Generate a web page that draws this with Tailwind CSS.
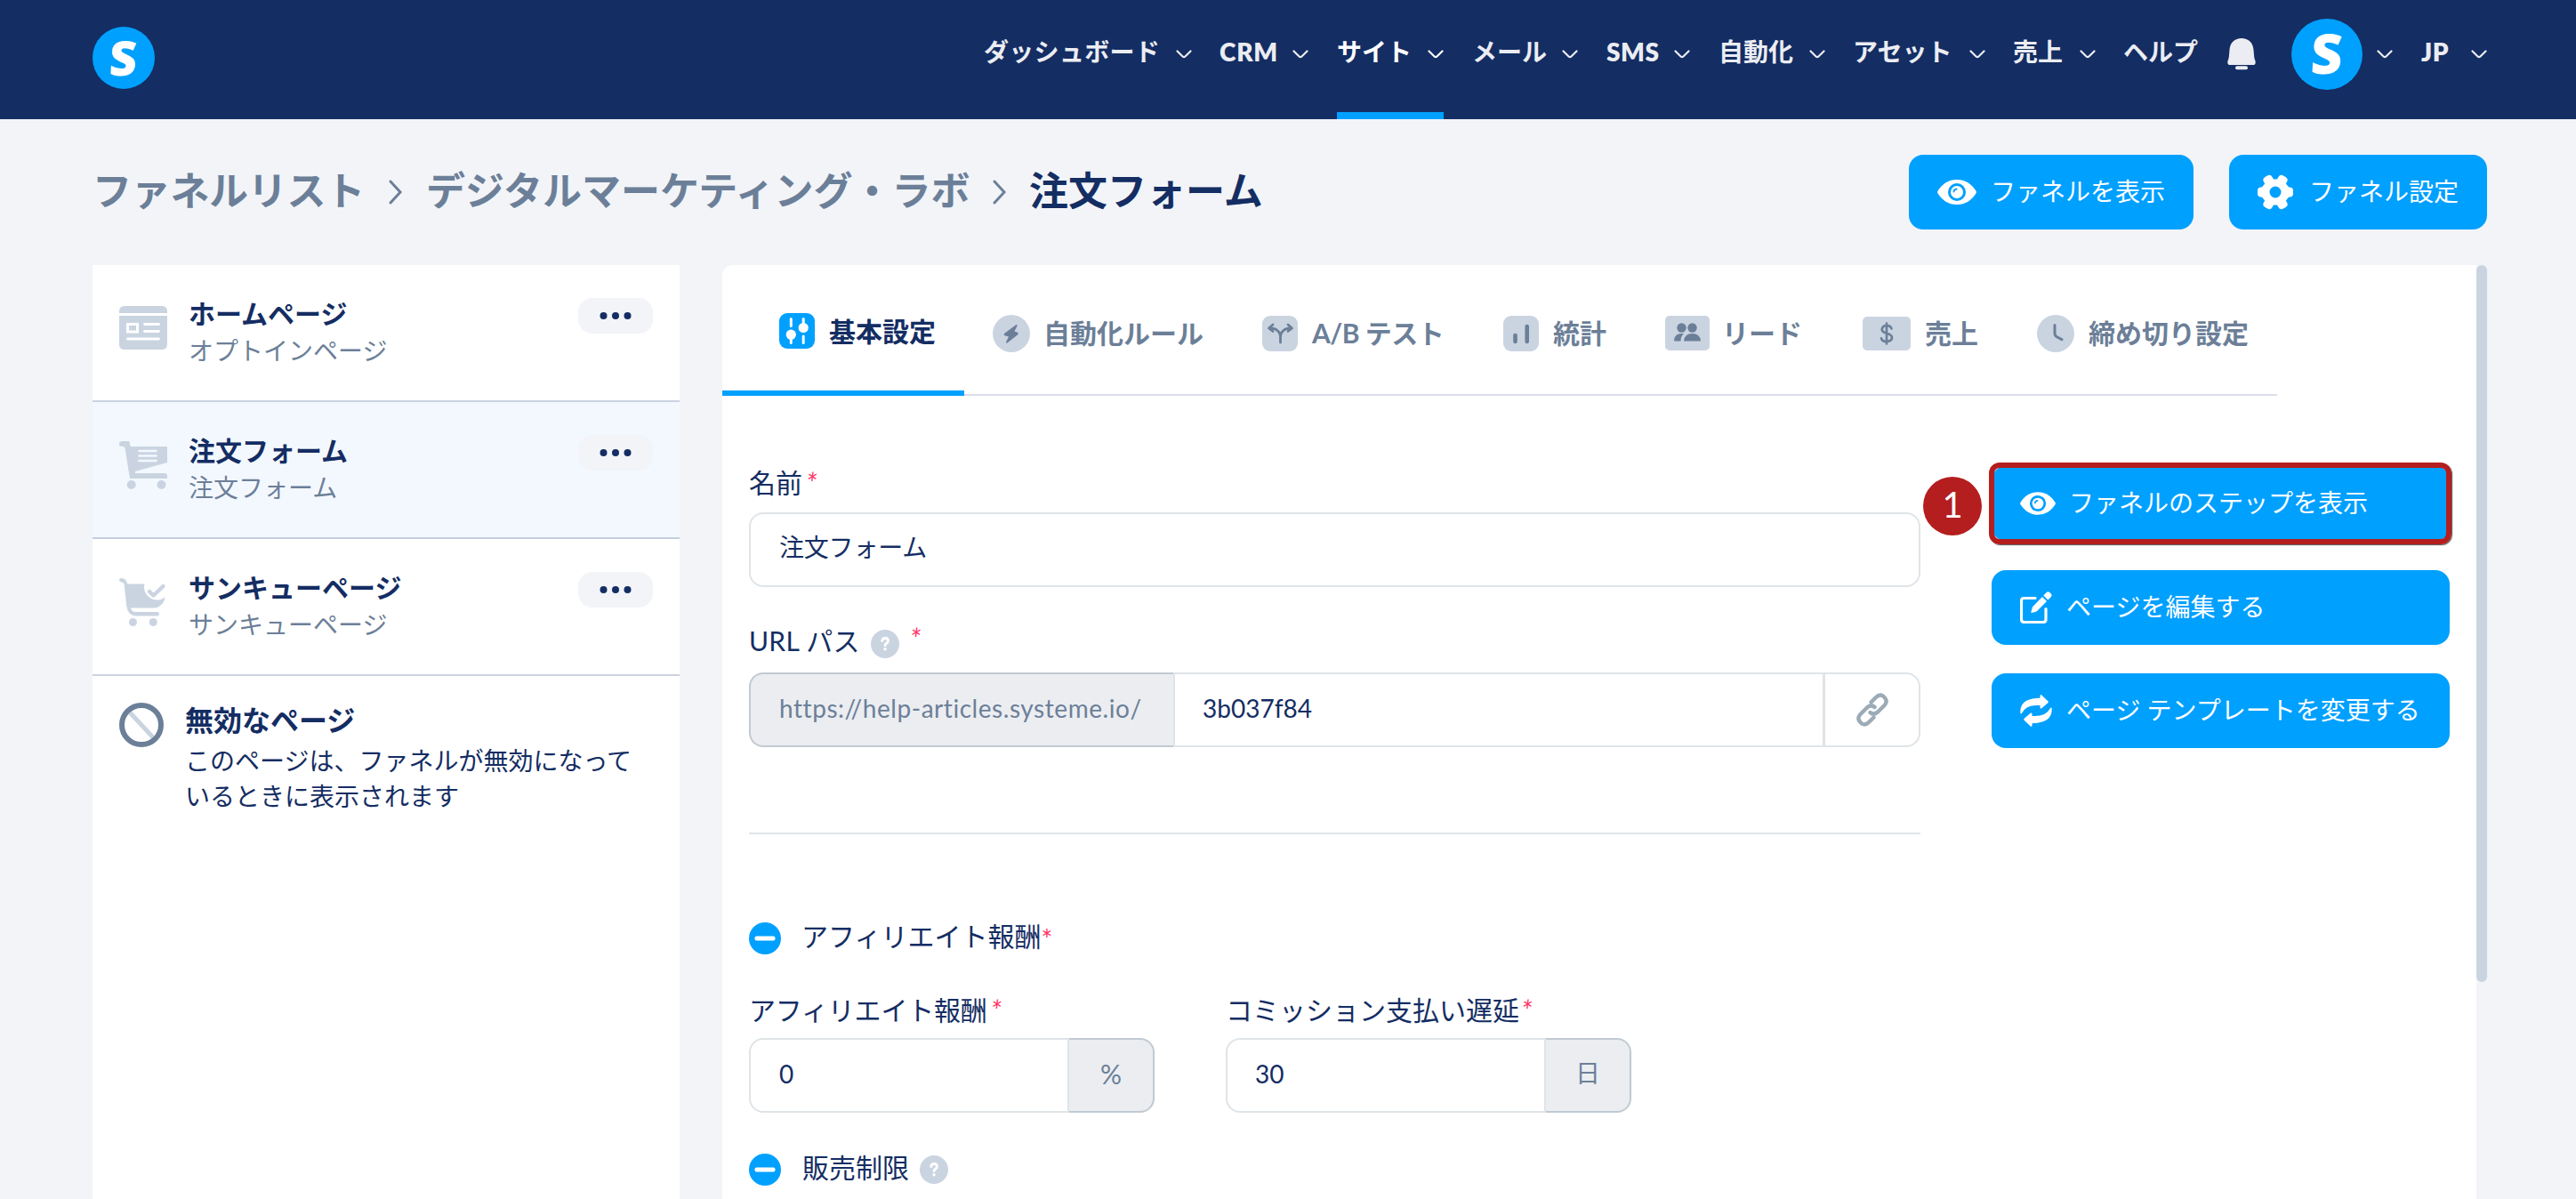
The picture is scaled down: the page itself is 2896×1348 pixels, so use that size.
<!DOCTYPE html>
<html lang="ja">
<head>
  <meta charset="UTF-8" />
  <meta name="viewport" content="width=device-width, initial-scale=1.0" />
  <title>注文フォーム - systeme.io</title>
  <script src="https://cdn.jsdelivr.net/npm/@tailwindcss/browser@4"></script>
</head>
<body class="h-[1348px] overflow-hidden bg-[#f2f4f8] font-['Lato','Noto_Sans_CJK_JP',sans-serif] text-[28px] text-[#142d63]">

  <!-- Shared icons -->
  <svg class="hidden">
    <symbol id="chevron" viewBox="0 0 18 10"><path d="M1.5 1.5l6.3 6.2q1.2 1 2.4 0l6.3-6.2" fill="none" stroke="currentColor" stroke-width="2.2" stroke-linecap="round" /></symbol>
    <symbol id="eye" viewBox="0 0 44 28">
      <path fill="currentColor" fill-rule="evenodd" d="M22 0C33 0 39 6 43.400 12.500Q44.300 14 43.400 15.500C39 22 33 28 22 28S5 22 .6 15.500Q-.3 14 .6 12.500C5 6 11 0 22 0zM22 4a10 10 0 1 0 0 20a10 10 0 1 0 0-20z" />
      <circle cx="22" cy="14" r="7" fill="currentColor" />
      <path d="M18.500 13.500q.3-2.700 3-3" fill="none" stroke="#00a0ff" stroke-width="1.800" stroke-linecap="round" />
    </symbol>
    <symbol id="help" viewBox="0 0 32 32">
      <circle cx="16" cy="16" r="16" fill="#cad4e1" />
      <path d="M12.800 12.500q.2-3 3.400-3t3.200 2.900q0 1.700-1.800 2.800-1.500.9-1.500 2.500" fill="none" stroke="#fff" stroke-width="2.900" stroke-linecap="round" />
      <circle cx="16" cy="21.800" r="1.700" fill="#fff" />
    </symbol>
    <symbol id="minus" viewBox="0 0 36 36"><circle cx="18" cy="18" r="18" fill="#00a0ff" /><rect x="6.500" y="15.500" width="23" height="5" rx="2" fill="#fff" /></symbol>
    <symbol id="dots" viewBox="0 0 36 8"><circle cx="4.500" cy="4" r="4" fill="#142d63" /><circle cx="18" cy="4" r="4" fill="#142d63" /><circle cx="31.500" cy="4" r="4" fill="#142d63" /></symbol>
  </svg>

  <!-- Header -->
  <header class="flex h-[134px] items-start justify-between bg-[#142d63] pr-[100px] pl-[104px] text-[#ebedf2]">
    <a class="mt-[30px] flex size-[70px] items-center justify-center rounded-full bg-[#00a0ff]">
      <span class="-skew-x-3 pb-0.5 font-['Open_Sans'] text-[54px] leading-none font-extrabold text-white">S</span>
    </a>
    <nav class="flex h-[134px] items-start leading-[116px] font-bold whitespace-nowrap">
      <a class="mr-[31px] flex w-[234px] items-center justify-between"><span class="tracking-[0.3px]">ダッシュボード</span><svg class="mt-1.5 h-2.5 w-[18px]"><use href="#chevron" /></svg></a>
      <a class="mr-8 flex w-[100px] items-center justify-between"><span class="font-extrabold tracking-[0.8px]">CRM</span><svg class="mt-1.5 h-2.5 w-[18px]"><use href="#chevron" /></svg></a>
      <a class="mr-8 flex h-[134px] w-[120px] items-start justify-between border-b-8 border-[#00a0ff] text-white">サイト<svg class="mt-14 h-2.5 w-[18px]"><use href="#chevron" /></svg></a>
      <a class="mr-8 flex w-[119px] items-center justify-between">メール<svg class="mt-1.5 h-2.5 w-[18px]"><use href="#chevron" /></svg></a>
      <a class="mr-8 flex w-[94px] items-center justify-between"><span class="font-extrabold tracking-[0.6px]">SMS</span><svg class="mt-1.5 h-2.5 w-[18px]"><use href="#chevron" /></svg></a>
      <a class="mr-[31px] flex w-[120px] items-center justify-between">自動化<svg class="mt-1.5 h-2.5 w-[18px]"><use href="#chevron" /></svg></a>
      <a class="mr-[31px] flex w-[149px] items-center justify-between">アセット<svg class="mt-1.5 h-2.5 w-[18px]"><use href="#chevron" /></svg></a>
      <a class="mr-[31px] flex w-[93px] items-center justify-between">売上<svg class="mt-1.5 h-2.5 w-[18px]"><use href="#chevron" /></svg></a>
      <a class="mr-[33px] w-[84px]">ヘルプ</a>
      <svg class="mt-[43px] h-9 w-8" viewBox="0 0 32 36" fill="currentColor">
        <path d="M16 0c7.500 0 13 5 13.500 13l.7 8q.2 2 1.300 4.500.9 4.500-2.500 4.500H3Q-.4 30 .5 25.500 1.600 23 1.800 21l.7-8C3 5 8.500 0 16 0z" /><rect x="9" y="31.300" width="14" height="4" rx="2" />
      </svg>
      <a class="mt-[21px] ml-10 flex size-20 items-center justify-center rounded-full bg-[#00a0ff]"><span class="-skew-x-3 pb-1 font-['Open_Sans'] text-[62px] leading-none font-extrabold text-white">S</span></a>
      <svg class="mt-14 ml-4 h-2.5 w-[18px]"><use href="#chevron" /></svg>
      <a class="ml-8 flex w-[74px] items-center justify-between"><span class="font-extrabold tracking-[0.5px]">JP</span><svg class="mt-1.5 h-2.5 w-[18px]"><use href="#chevron" /></svg></a>
    </nav>
  </header>

  <!-- Breadcrumb and funnel actions -->
  <section class="flex h-[164px] items-start justify-between pt-10 pr-[100px] pl-[104px]">
    <div class="flex h-[84px] items-center text-[44px] font-bold whitespace-nowrap text-[#6c7f98]">
      <a class="w-[333px] pb-1 tracking-[-0.3px]">ファネルリスト</a>
      <svg class="h-7 w-4" viewBox="0 0 16 28" fill="none" stroke="currentColor" stroke-width="3" stroke-linecap="round"><path d="M2 2l11 12L2 26" /></svg>
      <a class="ml-[26px] w-[637px] pb-1">デジタルマーケティング・ラボ</a>
      <svg class="h-7 w-4" viewBox="0 0 16 28" fill="none" stroke="currentColor" stroke-width="3" stroke-linecap="round"><path d="M2 2l11 12L2 26" /></svg>
      <span class="ml-[25px] pb-1 text-[#142d63]">注文フォーム</span>
    </div>
    <div class="flex gap-10 whitespace-nowrap text-white">
      <button class="flex h-[84px] w-80 items-center rounded-2xl bg-[#00a0ff] pl-8">
        <svg class="mr-4 h-7 w-11"><use href="#eye" /></svg><span class="pb-0.5">ファネルを表示</span>
      </button>
      <button class="flex h-[84px] w-[290px] items-center rounded-2xl bg-[#00a0ff] pl-8">
        <svg class="mr-[18px] h-10 w-10" viewBox="-20 -20 40 40" fill="currentColor">
          <path fill-rule="evenodd" d="M-16-4.500L-11-10.500-4-14.500H4L11-10.500 16-4.500V4.500L11 10.500 4 14.500H-4L-11 10.500-16 4.500zM0-6.500a6.500 6.500 0 1 0 0 13a6.500 6.500 0 1 0 0-13z" />
          <g><rect x="-20" y="-5.500" width="10" height="11" rx="4" /><rect x="10" y="-5.500" width="10" height="11" rx="4" /></g>
          <g transform="rotate(60)"><rect x="-20.500" y="-5.500" width="10" height="11" rx="4" /><rect x="10.500" y="-5.500" width="10" height="11" rx="4" /></g>
          <g transform="rotate(120)"><rect x="-20.500" y="-5.500" width="10" height="11" rx="4" /><rect x="10.500" y="-5.500" width="10" height="11" rx="4" /></g>
        </svg><span class="pb-0.5">ファネル設定</span>
      </button>
    </div>
  </section>

  <main class="flex items-start pl-[104px]">

    <!-- Funnel steps -->
    <aside class="h-[1050px] w-[660px] bg-white">
      <div class="flex h-[154px] items-start border-b-2 border-[#cbd3e1] pr-[30px] pl-[30px]">
        <svg class="mt-[46px] h-[49px] w-[54px]" viewBox="0 0 54 49">
          <path fill="#cad4e1" d="M0 8V6Q0 0 6 0h42q6 0 6 6v2zM0 11h54v32q0 6-6 6H6q-6 0-6-6z" />
          <rect x="9.500" y="20.500" width="11" height="8.500" fill="none" stroke="#fff" stroke-width="3" />
          <path d="M28.500 20.500h16M28.500 28.500h16M9.500 37h35" stroke="#fff" stroke-width="2.800" stroke-linecap="round" />
        </svg>
        <div class="ml-6 flex-1 pt-[34px]">
          <p class="text-[30px] leading-10 font-bold">ホームページ</p>
          <p class="mt-1 leading-9 text-[#6c7f98]">オプトインページ</p>
        </div>
        <button class="mt-[37px] flex h-10 w-[84px] items-center justify-center rounded-2xl bg-[#f2f4f8]"><svg class="h-2 w-9"><use href="#dots" /></svg></button>
      </div>
      <div class="flex h-[154px] items-start border-b-2 border-[#c5cfe1] bg-[#f3f8ff] pr-[30px] pl-[30px]">
        <svg class="mt-[44px] h-[54px] w-[54px]" viewBox="0 0 54 54">
          <path fill="#cad4e1" d="M3 0h7q2 0 2 2v2q0 2 2 2h40v18L18 34v2h33q3 0 3 3v3H12L6.500 8Q6 6 4 6H3Q0 6 0 3T3 0z" />
          <path d="M22.500 11h19M22.500 16.500h19M22.500 22h19" stroke="#f3f8ff" stroke-width="2.600" stroke-linecap="round" />
          <circle cx="13.700" cy="49" r="5" fill="#cad4e1" /><circle cx="47.500" cy="49" r="5" fill="#cad4e1" />
        </svg>
        <div class="ml-6 flex-1 pt-[34px]">
          <p class="text-[30px] leading-10 font-bold">注文フォーム</p>
          <p class="mt-1 leading-9 text-[#6c7f98]">注文フォーム</p>
        </div>
        <button class="mt-[37px] flex h-10 w-[84px] items-center justify-center rounded-2xl bg-[#f2f4f8]"><svg class="h-2 w-9"><use href="#dots" /></svg></button>
      </div>
      <div class="flex h-[154px] items-start border-b-2 border-[#cbd3e1] pr-[30px] pl-[30px]">
        <svg class="mt-[44px] h-[54px] w-[54px]" viewBox="0 0 54 54">
          <path fill="#cad4e1" d="M2 0Q7.500-.3 9.200 6.500H28.500A14.500 14.500 0 0 0 51.500 21.500Q51 27 46.500 30.500 43.500 33.500 39 33.500H13Q14 38 19 38H43q2 0 2 2.200T43 42.500H20Q9.500 42.500 8.300 31.500L5.500 6.500Q5.200 4.500 2 4.200 0 4 0 2T2 0z" />
          <path d="M34 15l4.500 4.500L49.500 9" fill="none" stroke="#cad4e1" stroke-width="4.400" stroke-linecap="round" stroke-linejoin="round" />
          <circle cx="15.500" cy="49.500" r="4.500" fill="#cad4e1" /><circle cx="38.300" cy="49.500" r="4.500" fill="#cad4e1" />
        </svg>
        <div class="ml-6 flex-1 pt-[34px]">
          <p class="text-[30px] leading-10 font-bold">サンキューページ</p>
          <p class="mt-1 leading-9 text-[#6c7f98]">サンキューページ</p>
        </div>
        <button class="mt-[37px] flex h-10 w-[84px] items-center justify-center rounded-2xl bg-[#f2f4f8]"><svg class="h-2 w-9"><use href="#dots" /></svg></button>
      </div>
      <div class="flex items-start pl-[30px]">
        <svg class="mt-[30px] size-[50px]" viewBox="0 0 50 50" fill="none" stroke-width="6">
          <path d="M12 11l26 28" stroke="#cad4e1" stroke-width="5" /><circle cx="25" cy="25" r="22" stroke="#6c7f98" />
        </svg>
        <div class="ml-6 pt-[30px]">
          <p class="text-[32px] leading-10 font-bold">無効なページ</p>
          <p class="mt-[5px] leading-10">このページは、ファネルが無効になって<br />いるときに表示されます</p>
        </div>
      </div>
    </aside>

    <!-- Step settings -->
    <section class="ml-12 h-[1050px] w-[1972px] rounded-tl-xl bg-white">

      <!-- Tabs -->
      <div class="flex h-[147px] w-[1748px] border-b-2 border-[#dadde8] text-[30px] font-bold whitespace-nowrap text-[#6c7f98]">
        <a class="flex h-[147px] w-[272px] items-center border-b-6 border-[#00a0ff] pt-[7px] pl-16 text-[#142d63]">
          <svg class="mr-4 size-10" viewBox="0 0 40 40">
            <rect width="40" height="40" rx="9" fill="#00a0ff" />
            <g stroke="#fff" stroke-width="3" stroke-linecap="round"><path d="M13.300 6.500v8M13.300 24v9.500M27.200 6.500v8M27.200 26v7.500" /></g>
            <circle cx="13.300" cy="24.200" r="5.600" fill="#fff" /><circle cx="27.200" cy="16.500" r="5.600" fill="#fff" />
          </svg>基本設定
        </a>
        <a class="flex w-[303px] items-center pt-2 pl-8">
          <svg class="mr-[15px] size-[42px]" viewBox="0 0 42 42"><circle cx="21" cy="21" r="21" fill="#cad4e1" /><path fill="#6c7f98" d="M26.500 11L13 21q-1 1.500 .5 2.200l4.500 1.200-3 6q0 1.600 1.500 1.200L28.500 22q1-1.500-.5-2.200l-3.500-1.300 3-6Q27.700 10.500 26.500 11z" /></svg>自動化ルール
        </a>
        <a class="flex w-[271px] items-center pt-2 pl-8">
          <svg class="mr-4 size-10" viewBox="0 0 40 40"><rect width="40" height="40" rx="9" fill="#cad4e1" /><path d="M20.500 30V23Q20.500 19.500 17 16.500 14.500 14 9 14M20.500 23Q20.500 19.500 24 16.500 26.500 14 32 14M12 10l-4.500 4 4.500 3.500M29 10l4.500 4-4.500 3.500" fill="none" stroke="#6c7f98" stroke-width="2.800" stroke-linecap="round" stroke-linejoin="round" /></svg><span class="tracking-[-0.5px]">A/B テスト</span>
        </a>
        <a class="flex w-[182px] items-center pt-2 pl-8">
          <svg class="mr-4 size-10" viewBox="0 0 40 40"><rect width="40" height="40" rx="9" fill="#cad4e1" /><path d="M13.500 22v7M26.700 12v17" stroke="#6c7f98" stroke-width="4.600" stroke-linecap="round" /></svg>統計
        </a>
        <a class="flex w-[222px] items-center pt-2 pl-8">
          <svg class="mr-[14px] h-[39px] w-[50px]" viewBox="0 0 50 39"><rect width="50" height="39" rx="5" fill="#cad4e1" /><g fill="#6c7f98"><circle cx="18.500" cy="13.500" r="5.200" /><circle cx="30.500" cy="13.500" r="5.200" /><path d="M10 28.500q0-8 7.500-8.500h3.500q-3.500 3-3.500 8.500H10zM21 28.500q.5-8.500 9.500-8.500t9.500 8.500z" /></g></svg>リード
        </a>
        <a class="flex w-[196px] items-center pt-2 pl-8">
          <svg class="mr-4 h-[38px] w-[54px]" viewBox="0 0 54 38"><rect width="54" height="38" rx="5" fill="#cad4e1" /><path d="M27 7.500v23M32.500 13.500q-1-3.500-5.500-3.500t-5.300 4.200q0 3 5.300 4.500 6 1.500 6 5t-6 4.300q-5 0-6-3.700" fill="none" stroke="#6c7f98" stroke-width="2.700" stroke-linecap="round" /></svg>売上
        </a>
        <a class="flex items-center pt-2 pl-8">
          <svg class="mr-4 size-[42px]" viewBox="0 0 42 42"><circle cx="21" cy="21" r="21" fill="#cad4e1" /><path d="M20 11.500v9.500q0 2 2 3.500l6 3.300" fill="none" stroke="#6c7f98" stroke-width="3" stroke-linecap="round" /></svg>締め切り設定
        </a>
      </div>

      <div class="flex pl-[30px]">
        <!-- Form -->
        <form class="w-[1317px] pt-20 text-[28px]">
          <label class="flex h-9 items-center text-[30px]"><span class="pb-0.5">名前</span><span class="ml-1 text-[32px] text-[#ff3366] italic">*</span></label>
          <div class="mt-[15px] flex h-[84px] items-center rounded-2xl border-2 border-[#dfe4e8] pb-1.5 pl-8 tracking-[-0.2px]">注文フォーム</div>

          <label class="mt-[43px] flex h-9 items-center text-[30px]"><span class="pb-0.5 tracking-[0.3px]">URL パス</span><svg class="mt-1.5 ml-3 size-8"><use href="#help" /></svg><span class="mb-1.5 ml-3 text-[32px] text-[#ff3366] italic">*</span></label>
          <div class="mt-[17px] flex h-[84px]">
            <span class="flex w-[477px] items-center rounded-l-2xl border-2 border-r-0 border-[#c1cad2] bg-[#ebedf1] pb-1 pl-8 tracking-[0.55px] text-[#6c7f98]">https://help-articles.systeme.io/</span>
            <span class="flex w-[732px] items-center border-2 border-[#dfe4e8] pb-1 pl-[31px]">3b037f84</span>
            <span class="flex w-[108px] items-center justify-center rounded-r-2xl border-2 border-l-1 border-[#dfe4e8]">
              <svg class="h-[38px] w-[38px]" viewBox="0 0 38 38" fill="none" stroke="#9cabb6" stroke-width="4.400" stroke-linecap="round" stroke-linejoin="round"><path d="M17.500 10.500l5.500-5.500q4-4 8-1.500l1.500 1.500q4 4 .5 8.500l-8 8q-4.500 4-8.500 .5M20.500 27.500l-5.500 5.500q-4 4-8 1.500l-1.500-1.500q-4-4-.5-8.500l8-8q4.500-4 8.500-.5" /></svg>
            </span>
          </div>

          <hr class="mt-24 border-t-2 border-[#dfe4e8]" />

          <div class="mt-[99px] flex h-9 items-center text-[30px]">
            <svg class="size-9"><use href="#minus" /></svg>
            <span class="ml-[23px] pb-1.5">アフィリエイト報酬</span><span class="text-[30px] text-[#ff3366]">*</span>
          </div>
          <div class="mt-[45px] flex gap-20">
            <div class="w-[456px]">
              <label class="flex h-9 items-center text-[30px] whitespace-nowrap"><span class="pb-0.5 tracking-[-0.2px]">アフィリエイト報酬</span><span class="ml-1 text-[32px] text-[#ff3366] italic">*</span></label>
              <div class="mt-[13px] flex h-[84px]">
                <span class="flex w-[360px] items-center rounded-l-2xl border-2 border-[#dfe4e8] pb-1 pl-8">0</span>
                <span class="flex w-24 items-center justify-center rounded-r-2xl border-2 border-l-0 border-[#c1cad2] bg-[#ebedf1] pb-1 text-[30px] text-[#6c7f98]">%</span>
              </div>
            </div>
            <div class="w-[456px]">
              <label class="flex h-9 items-center text-[30px] whitespace-nowrap"><span class="pb-0.5">コミッション支払い遅延</span><span class="ml-0.5 text-[32px] text-[#ff3366] italic">*</span></label>
              <div class="mt-[13px] flex h-[84px]">
                <span class="flex w-[360px] items-center rounded-l-2xl border-2 border-[#dfe4e8] pb-1 pl-[31px]">30</span>
                <span class="flex w-24 items-center justify-center rounded-r-2xl border-2 border-l-0 border-[#c1cad2] bg-[#ebedf1] pb-1.5 text-[#6c7f98]">日</span>
              </div>
            </div>
          </div>

          <div class="mt-[46px] flex h-9 items-center text-[30px]">
            <svg class="size-9"><use href="#minus" /></svg>
            <span class="ml-6 pb-1.5">販売制限</span><svg class="ml-3 size-8"><use href="#help" /></svg>
          </div>
        </form>

        <!-- Page actions -->
        <div class="ml-20 w-[515px] pt-[79px] whitespace-nowrap text-white">
          <div class="relative">
            <button class="flex h-[84px] w-full items-center rounded-2xl bg-[#00a0ff] pl-8">
              <svg class="mr-[15px] h-[26px] w-10"><use href="#eye" /></svg><span class="pb-0.5">ファネルのステップを表示</span>
            </button>
            <span class="absolute -top-1 -left-[3px] h-[92px] w-[520px] rounded-xl border-6 border-[#b41e1e] shadow-[1px_1px_1px_#555]"></span>
            <span class="absolute top-3 -left-[77px] flex size-[66px] items-center justify-center rounded-full bg-[#b41e1e] pb-1 text-[40px]">1</span>
          </div>
          <button class="mt-[33px] flex h-[84px] w-full items-center rounded-2xl bg-[#00a0ff] pl-8">
            <svg class="mr-4 h-9 w-9" viewBox="0 0 36 36">
              <path d="M17 7.500H4.500q-3 0-3 3v21q0 3 3 3h21.500q3 0 3-3V19.500" fill="none" stroke="currentColor" stroke-width="3.200" stroke-linecap="round" />
              <path fill="currentColor" d="M25 6l5 5L18.500 22.500 13 24q-.8 0-.6-.9L14 17.300zM26.300 4.600l3.200-3.400q2-1.800 4 0l1 1q2 2 .2 4L31.400 9.600z" />
            </svg><span class="pb-0.5">ページを編集する</span>
          </button>
          <button class="mt-8 flex h-[84px] w-full items-center rounded-2xl bg-[#00a0ff] pl-8">
            <svg class="mr-4 h-9 w-9" viewBox="0 0 36 36" fill="currentColor">
              <path d="M.3 20.500Q-.5 4 22.500 3.800V1.200q.4-1.800 1.800-.6l7 6.600q1 1 0 2l-7 6q-1.500 1-1.800-.6V12Q7 11 2.200 20.500 1 22.500 .3 20.500z" />
              <path d="M35.700 15.500Q36.500 32 13.500 32.200v2.600q-.4 1.800-1.800 .6l-7-6.600q-1-1 0-2l7-6q1.500-1 1.800 .6V24Q29 25 33.800 15.500 35 13.500 35.700 15.500z" />
            </svg><span class="pb-0.5">ページ テンプレートを変更する</span>
          </button>
        </div>
      </div>
    </section>

    <!-- Scrollbar -->
    <div class="h-[806px] w-3 rounded-md bg-[#cad4e1]"></div>
  </main>

</body>
</html>
